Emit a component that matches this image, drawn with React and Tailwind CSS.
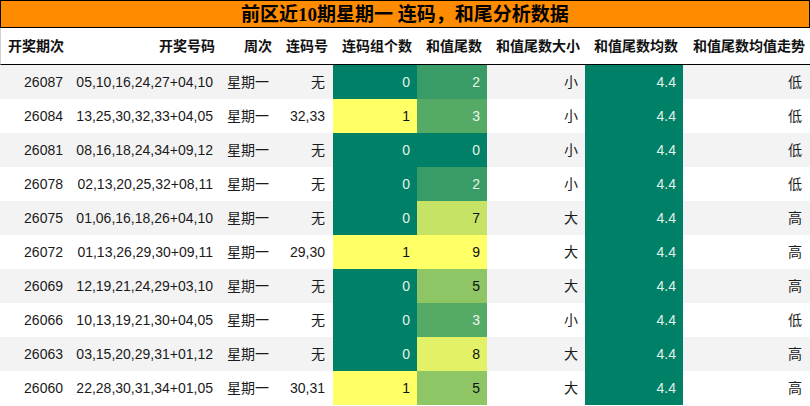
import React from "react";

const rows = [
  ["26087", "05,10,16,24,27+04,10", "无", 0, 2, "小", "低"],
  ["26084", "13,25,30,32,33+04,05", "32,33", 1, 3, "小", "低"],
  ["26081", "08,16,18,24,34+09,12", "无", 0, 0, "小", "低"],
  ["26078", "02,13,20,25,32+08,11", "无", 0, 2, "小", "低"],
  ["26075", "01,06,16,18,26+04,10", "无", 0, 7, "大", "高"],
  ["26072", "01,13,26,29,30+09,11", "29,30", 1, 9, "大", "高"],
  ["26069", "12,19,21,24,29+03,10", "无", 0, 5, "大", "高"],
  ["26066", "10,13,19,21,30+04,05", "无", 0, 3, "小", "低"],
  ["26063", "03,15,20,29,31+01,12", "无", 0, 8, "大", "高"],
  ["26060", "22,28,30,31,34+01,05", "30,31", 1, 5, "大", "高"],
];

const tailColor = {
  0: "bg-[#008066] text-[#e3f1ec]",
  2: "bg-[#399c66] text-[#e8f4ec]",
  3: "bg-[#55aa66] text-[#eef7ef]",
  5: "bg-[#8ec666] text-[#111111]",
  7: "bg-[#c6e366] text-[#111111]",
  8: "bg-[#e3f166] text-[#111111]",
  9: "bg-[#ffff66] text-[#111111]",
};

const groupColor = {
  0: "bg-[#008066] text-[#e3f1ec]",
  1: "bg-[#ffff66] text-[#111111]",
};

const grid =
  "grid grid-cols-[71px_149px_57px_56px_84px_70px_98px_98px_127px]";

const font = {
  fontFamily: '"Liberation Sans", "Noto Sans CJK SC", sans-serif',
};

export default function App() {
  const headers = [
    "开奖期次",
    "开奖号码",
    "周次",
    "连码号",
    "连码组个数",
    "和值尾数",
    "和值尾数大小",
    "和值尾数均数",
    "和值尾数均值走势",
  ];
  return (
    <div className="w-[810px] h-[406px] bg-white overflow-hidden" style={font}>
      <div
        className="h-[28px] border border-black bg-[#ff8c00] flex items-center justify-center text-[19px] font-bold text-black leading-none"
        style={{ fontFamily: '"Liberation Serif", "Noto Sans CJK SC", serif' }}
      >
        前区近10期星期一 连码，和尾分析数据
      </div>
      <div className={`${grid} h-[37px] border-b border-black border-l border-l-[#d0d0d0] text-[14px] font-bold text-[#111]`}>
        {headers.map((h, i) => (
          <div
            key={i}
            className={`flex items-center ${i === 0 ? "justify-start pl-[7px]" : "justify-end pr-[6px]"} whitespace-nowrap`}
          >
            {h}
          </div>
        ))}
      </div>
      {rows.map((r, idx) => (
        <div
          key={idx}
          className={`${grid} h-[34px] text-[14px] text-[#1a1a1a] ${idx % 2 === 0 ? "bg-[#f3f3f3]" : "bg-white"}`}
        >
          <div className="flex items-center justify-end pr-[8px]">{r[0]}</div>
          <div className="flex items-center justify-end pr-[7px] whitespace-nowrap">{r[1]}</div>
          <div className="flex items-center justify-end pr-[8px]">星期一</div>
          <div className="flex items-center justify-end pr-[8px]">{r[2]}</div>
          <div className={`flex items-center justify-end pr-[7px] ${groupColor[r[3]]}`}>{r[3]}</div>
          <div className={`flex items-center justify-end pr-[7px] ${tailColor[r[4]]}`}>{r[4]}</div>
          <div className="flex items-center justify-end pr-[7px]">{r[5]}</div>
          <div className="flex items-center justify-end pr-[7px] bg-[#008066] text-[#e3f1ec]">4.4</div>
          <div className="flex items-center justify-end pr-[8px]">{r[6]}</div>
        </div>
      ))}
    </div>
  );
}
